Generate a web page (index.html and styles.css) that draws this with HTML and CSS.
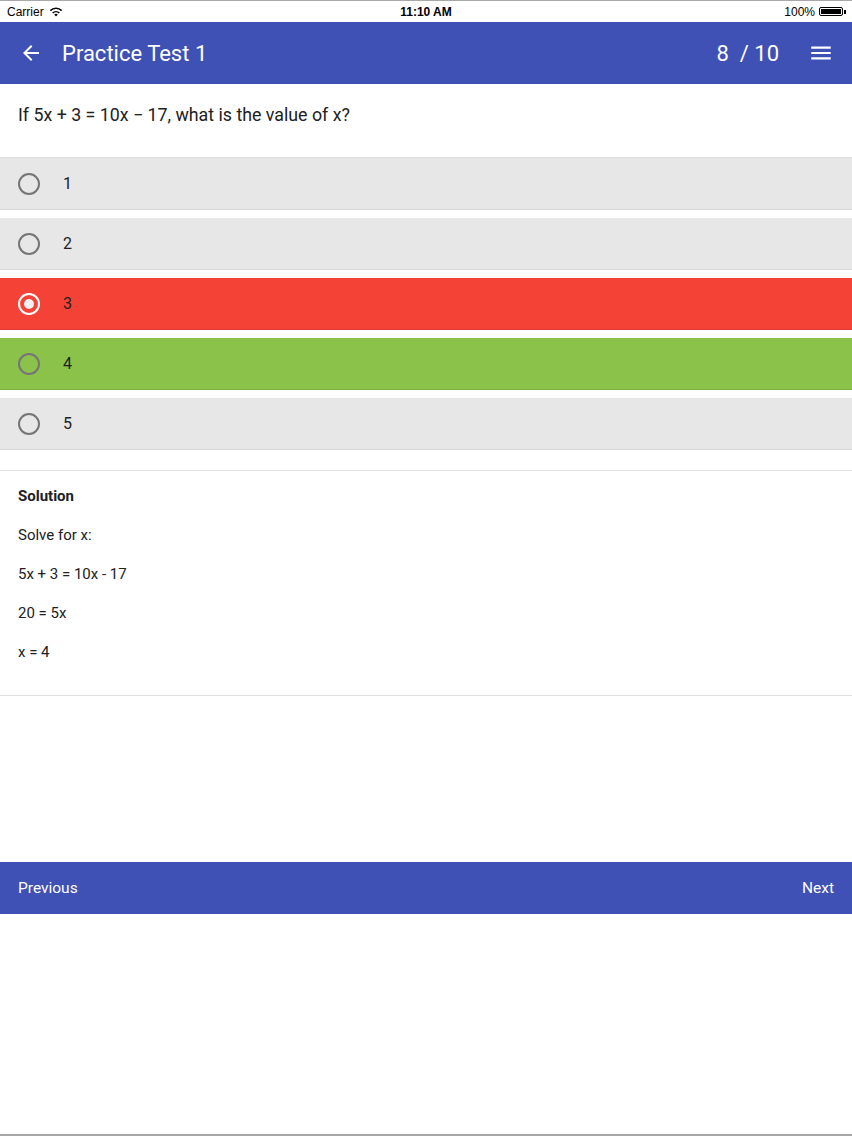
FILE: index.html
```html
<!DOCTYPE html>
<html lang="en">
<head>
  <meta charset="UTF-8">
  <meta name="viewport" content="width=device-width, initial-scale=1.0">
  <title>Practice Test 1</title>
  <link rel="stylesheet" href="styles.css">
</head>
<body>
  <div class="status-bar">
    <div class="status-left">
      <span>Carrier</span>
      <svg class="wifi" width="14" height="10" viewBox="0 0 14 10">
        <path d="M7 9.6 L5.2 7.6 A2.6 2.6 0 0 1 8.8 7.6 Z" fill="#000"/>
        <path d="M3.6 6 A4.9 4.9 0 0 1 10.4 6" stroke="#000" stroke-width="1.5" fill="none"/>
        <path d="M1.4 3.6 A8 8 0 0 1 12.6 3.6" stroke="#000" stroke-width="1.5" fill="none"/>
      </svg>
    </div>
    <div class="status-time">11:10 AM</div>
    <div class="status-right">
      <span>100%</span>
      <span class="battery"><span class="battery-fill"></span></span>
      <span class="battery-tip"></span>
    </div>
  </div>

  <header class="app-bar">
    <svg class="back" width="24" height="24" viewBox="0 0 24 24">
      <path d="M20 11H7.83l5.59-5.59L12 4l-8 8 8 8 1.41-1.41L7.83 13H20v-2z" fill="#fff"/>
    </svg>
    <h1 class="title">Practice Test 1</h1>
    <div class="counter">8 &nbsp;/ 10</div>
    <svg class="menu" width="26" height="26" viewBox="0 0 24 24">
      <path d="M3 18h18v-2H3v2zm0-5h18v-2H3v2zm0-7v2h18V6H3z" fill="#fff"/>
    </svg>
  </header>

  <div class="question">If 5x + 3 = 10x &minus; 17, what is the value of x?</div>

  <div class="options">
    <div class="option"><span class="radio"></span><span class="label">1</span></div>
    <div class="option"><span class="radio"></span><span class="label">2</span></div>
    <div class="option wrong"><span class="radio checked"></span><span class="label">3</span></div>
    <div class="option right"><span class="radio"></span><span class="label">4</span></div>
    <div class="option"><span class="radio"></span><span class="label">5</span></div>
  </div>

  <div class="solution">
    <p class="solution-title">Solution</p>
    <p>Solve for x:</p>
    <p>5x + 3 = 10x - 17</p>
    <p>20 = 5x</p>
    <p>x = 4</p>
  </div>

  <footer class="nav-bar">
    <span>Previous</span>
    <span>Next</span>
  </footer>

  <div class="bottom-line"></div>
</body>
</html>
```

FILE: styles.css
```css
body {
  margin: 0;
  padding: 0;
  font-family: Roboto, "Liberation Sans", Arial, sans-serif;
  color: #212121;
  background: #fff;
  width: 852px;
  height: 1136px;
  display: flex;
  flex-direction: column;
  overflow: hidden;
}
.status-bar {
  height: 21px;
  border-top: 1px solid #a8a8a8;
  display: flex;
  align-items: center;
  justify-content: space-between;
  padding: 0 6px 0 7px;
  font-family: "Liberation Sans", Arial, sans-serif;
  font-size: 12px;
  color: #000;
  position: relative;
}
.status-left {
  display: flex;
  align-items: center;
  gap: 5px;
}
.status-time {
  position: absolute;
  left: 0;
  right: 0;
  text-align: center;
  font-weight: bold;
  font-size: 12px;
}
.status-right {
  display: flex;
  align-items: center;
  gap: 2px;
}
.battery {
  width: 24px;
  height: 9px;
  border: 1px solid #000;
  border-radius: 2px;
  padding: 1px;
  box-sizing: border-box;
  display: flex;
  margin-left: 2px;
}
.battery-fill {
  flex: 1;
  background: #000;
}
.battery-tip {
  width: 2px;
  height: 4px;
  background: #000;
  margin-left: -1px;
}
.app-bar {
  height: 62px;
  background: #3f51b5;
  display: flex;
  align-items: center;
  color: #fff;
  padding: 0 18px 0 19px;
}
.back {
  margin-right: 19px;
}
.title {
  margin: 0;
  font-size: 22px;
  font-weight: 400;
  flex: 1;
}
.counter {
  font-size: 22px;
  margin-right: 29px;
}
.question {
  font-size: 17.8px;
  line-height: 22px;
  padding: 20px 18px 31px;
}
.options {
  border-top: 1px solid #dcdcdc;
  display: flex;
  flex-direction: column;
  gap: 8px;
}
.option {
  height: 51px;
  border-bottom: 1px solid #d8d8d8;
  background: #e8e7e8;
  display: flex;
  align-items: center;
  padding-left: 18px;
  font-size: 16px;
}
.option.wrong {
  background: #f44336;
  border-bottom-color: #e53935;
}
.option.right {
  background: #8bc34a;
  border-bottom-color: #7cb342;
}
.radio {
  width: 18px;
  height: 18px;
  border: 2px solid #757575;
  border-radius: 50%;
  margin-right: 23px;
  display: flex;
  align-items: center;
  justify-content: center;
}
.radio.checked {
  border-color: #fff;
}
.radio.checked::after {
  content: "";
  width: 10px;
  height: 10px;
  border-radius: 50%;
  background: #f2f2f2;
}
.solution {
  margin-top: 20px;
  border-top: 1px solid #e0e0e0;
  border-bottom: 1px solid #e0e0e0;
  padding: 15px 18px 33px;
  font-size: 15px;
}
.solution p {
  margin: 0 0 19px;
  line-height: 20px;
}
.solution p:last-child {
  margin-bottom: 0;
}
.solution-title {
  font-weight: bold;
}
.nav-bar {
  margin-top: 166px;
  height: 52px;
  background: #3f51b5;
  color: #fff;
  display: flex;
  align-items: center;
  justify-content: space-between;
  padding: 0 18px;
  font-size: 15.5px;
}
.bottom-line {
  margin-top: auto;
  height: 2px;
  background: #a8a8a8;
}
```
